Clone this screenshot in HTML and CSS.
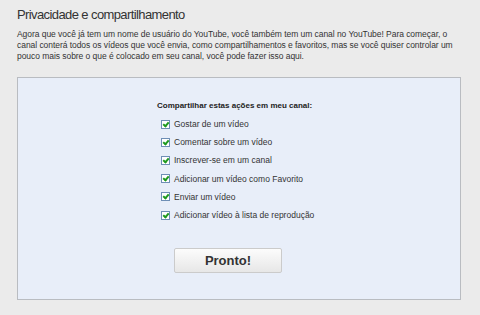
FILE: index.html
```html
<!DOCTYPE html>
<html lang="pt">

<head>
  <meta charset="UTF-8">
  <meta name="viewport" content="width=device-width, initial-scale=1.0">
  <title>Privacidade e compartilhamento</title>
  <link rel="stylesheet" href="styles.css">
</head>

<body>
  <div class="page">
    <h1>Privacidade e compartilhamento</h1>

    <p class="intro">Agora que você já tem um nome de usuário do YouTube, você também tem um canal no YouTube! Para começar, o
      canal conterá todos os vídeos que você envia, como compartilhamentos e favoritos, mas se você quiser controlar um
      pouco mais sobre o que é colocado em seu canal, você pode fazer isso aqui.</p>

    <div class="share-box">
      <div class="share-list">
        <div class="share-title">Compartilhar estas ações em meu canal:</div>
        <ul>
          <li><span class="check"></span>Gostar de um vídeo</li>
          <li><span class="check"></span>Comentar sobre um vídeo</li>
          <li><span class="check"></span>Inscrever-se em um canal</li>
          <li><span class="check"></span>Adicionar um vídeo como Favorito</li>
          <li><span class="check"></span>Enviar um vídeo</li>
          <li><span class="check"></span>Adicionar vídeo à lista de reprodução</li>
        </ul>
      </div>
      <button class="done-btn">Pronto!</button>
    </div>
  </div>
</body>

</html>
```

FILE: styles.css
```css
body {
  margin: 0;
  background-color: #ebebeb;
  font-family: "Liberation Sans", Arial, sans-serif;
  color: #333;
}

.page {
  padding: 7px 17px 0 17px;
}

h1 {
  margin: 0;
  font-size: 13px;
  font-weight: normal;
  color: #333;
  line-height: 16px;
  letter-spacing: -0.6px;
}

.intro {
  margin: 6px 0 0;
  font-size: 8.5px;
  line-height: 11px;
  letter-spacing: -0.05px;
  color: #333;
}

.share-box {
  margin-top: 15px;
  width: 442px;
  height: 221px;
  background-color: #e8eef9;
  border: 1px solid #b9bcc1;
}

.share-list {
  padding: 22px 0 0 139px;
  font-size: 8.5px;
}

.share-title {
  font-size: 8px;
  font-weight: bold;
  color: #222;
  line-height: 11px;
}

ul {
  list-style: none;
  margin: 4px 0 0;
  padding: 0 0 0 4px;
}

li {
  display: flex;
  align-items: center;
  height: 18.2px;
  color: #333;
}

.check {
  width: 7px;
  height: 7px;
  margin-right: 4px;
  border: 1px solid #6f8fb6;
  background-color: #fff;
  position: relative;
}

.check::after {
  content: "";
  position: absolute;
  left: 2px;
  top: 0;
  width: 2px;
  height: 4px;
  border: solid #1f9a1f;
  border-width: 0 2px 2px 0;
  transform: rotate(40deg);
}

.done-btn {
  display: block;
  margin: 24px 0 0 156px;
  width: 108px;
  height: 25px;
  font-family: "Liberation Sans", Arial, sans-serif;
  font-size: 13px;
  font-weight: bold;
  color: #333;
  background: linear-gradient(#fcfcfc, #e7e7e7);
  border: 1px solid #cbcbcb;
  border-radius: 2px;
}
```
